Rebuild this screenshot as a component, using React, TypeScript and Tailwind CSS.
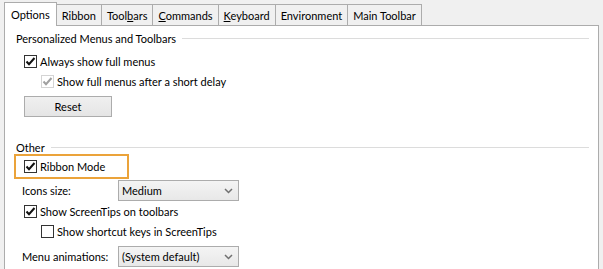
import type { ReactNode } from "react";

const font = { fontFamily: 'Lato, "Segoe UI", sans-serif' };

function Check({ checked, disabled }: { checked?: boolean; disabled?: boolean }) {
  return (
    <span
      className={`flex h-[13px] w-[13px] shrink-0 items-center justify-center border bg-white ${
        disabled ? "border-[#d4d4d4]" : "border-[#333333]"
      }`}
    >
      {checked && (
        <svg width="11" height="11" viewBox="0 0 11 11">
          <path
            d="M1.5 5.5 L4 8.2 L9.5 2"
            fill="none"
            stroke={disabled ? "#a0a0a0" : "#111111"}
            strokeWidth="2"
          />
        </svg>
      )}
    </span>
  );
}

function Option({ label, checked, disabled }: { label: string; checked?: boolean; disabled?: boolean }) {
  return (
    <div className="flex h-[15px] items-center gap-[3px] whitespace-nowrap">
      <Check checked={checked} disabled={disabled} />
      <span>{label}</span>
    </div>
  );
}

function Group({ title }: { title: string }) {
  return (
    <div className="flex h-[15px] items-center gap-[6px]">
      <span>{title}</span>
      <span className="h-px flex-1 bg-[#dcdcdc]" />
    </div>
  );
}

function Combo({ value }: { value: string }) {
  return (
    <div className="flex h-[21px] w-[121px] items-center justify-between border border-[#acacac] bg-gradient-to-b from-[#f4f4f4] to-[#e8e8e8] pl-[3px] pr-[5px]">
      <span>{value}</span>
      <svg width="9" height="6" viewBox="0 0 9 6">
        <path d="M1 1 L4.5 4.5 L8 1" fill="none" stroke="#707070" strokeWidth="1.5" />
      </svg>
    </div>
  );
}

export default function App() {
  // access keys underlined like the win32 dialog
  const tabs: { key: string; label: ReactNode }[] = [
    { key: "ribbon", label: "Ribbon" },
    { key: "toolbars", label: <>Tool<u>b</u>ars</> },
    { key: "commands", label: <><u>C</u>ommands</> },
    { key: "keyboard", label: <><u>K</u>eyboard</> },
    { key: "env", label: "Environment" },
    { key: "main", label: "Main Toolbar" },
  ];

  return (
    <div className="h-[269px] w-[603px] overflow-hidden bg-[#f0f0f0] text-[11px] leading-[15px] text-black" style={font}>
      <div className="flex h-[25px] items-end pl-[4px]">
        <div className="relative z-10 mb-[-1px] flex h-[24px] items-center border border-b-0 border-[#acacac] bg-white px-[6px]">
          Options
        </div>
        {tabs.map((t) => (
          <div
            key={t.key}
            className="flex h-[21px] items-center border border-b-0 border-l-0 border-[#acacac] bg-[#f0f0f0] px-[5px]"
          >
            <span>{t.label}</span>
          </div>
        ))}
      </div>
      <div className="ml-[4px] mr-[4px] h-[260px] border border-[#acacac] bg-white pl-[11px] pr-[9px] pt-[5px]">
        <Group title="Personalized Menus and Toolbars" />
        <div className="flex flex-col pl-[8px]">
          <div className="mt-[8px]">
            <Option label="Always show full menus" checked />
          </div>
          <div className="mt-[5px] pl-[17px]">
            <Option label="Show full menus after a short delay" checked disabled />
          </div>
          <button className="mt-[7px] h-[21px] w-[88px] border border-[#acacac] bg-gradient-to-b from-[#f0f0f0] to-[#e5e5e5]">
            Reset
          </button>
        </div>
        <div className="mt-[23px]">
          <Group title="Other" />
        </div>
        <div className="mt-[-1px] ml-[-2px] flex h-[25px] w-[115px] items-center border-2 border-[#eba33a] pl-[8px]">
          <Option label="Ribbon Mode" checked />
        </div>
        <div className="flex flex-col pl-[6px]">
          <div className="mt-[1px] flex h-[21px] items-center">
            <span className="w-[96px] whitespace-nowrap">Icons size:</span>
            <Combo value="Medium" />
          </div>
          <div className="mt-[3px] pl-[2px]">
            <Option label="Show ScreenTips on toolbars" checked />
          </div>
          <div className="mt-[5px] pl-[19px]">
            <Option label="Show shortcut keys in ScreenTips" />
          </div>
          <div className="mt-[7px] flex h-[21px] items-center">
            <span className="w-[96px] whitespace-nowrap">Menu animations:</span>
            <Combo value="(System default)" />
          </div>
        </div>
      </div>
    </div>
  );
}
